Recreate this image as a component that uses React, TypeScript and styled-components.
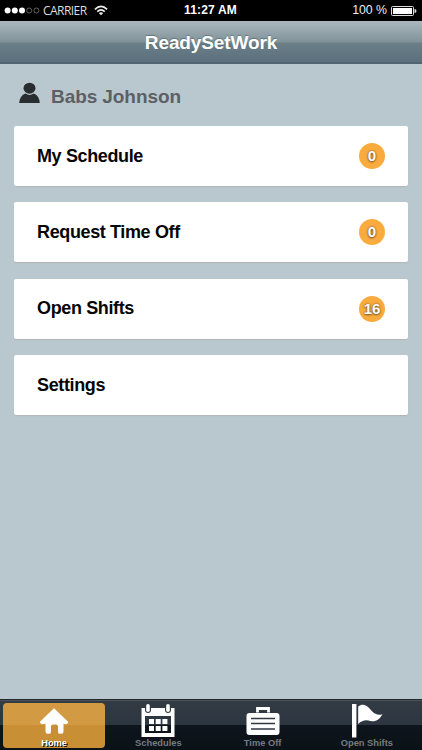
import React from 'react';
import styled, { createGlobalStyle } from 'styled-components';

const GlobalStyle = createGlobalStyle`
  html, body { margin: 0; padding: 0; }
  body { font-family: "Liberation Sans", Arial, sans-serif; background: #b9c8cf; }
  * { box-sizing: border-box; }
`;

const Screen = styled.div`
  width: 100%;
  height: 100vh;
  display: flex;
  flex-direction: column;
  background: #b9c8cf;
  overflow: hidden;
`;

const StatusBar = styled.div`
  flex: none;
  height: 21px;
  background: #000;
  color: #fff;
  display: grid;
  grid-template-columns: 1fr auto 1fr;
  align-items: center;
  padding: 0 5px 0 4px;
  line-height: 21px;
`;

const StatusGroup = styled.div<{ $end?: boolean }>`
  display: flex;
  align-items: center;
  justify-content: ${p => (p.$end ? 'flex-end' : 'flex-start')};
  svg { display: block; }
`;

const Carrier = styled.span`
  font: 12px/20px "Open Sans", "Noto Sans", sans-serif;
  letter-spacing: -0.55px;
  color: #ddd;
  margin: 0 7px 0 3px;
`;

const Clock = styled.span`
  font-size: 12px;
  font-weight: bold;
  letter-spacing: 0.15px;
`;

const Battery = styled.span`
  font-size: 12.3px;
  color: #eee;
  margin-right: 4px;
`;

const Header = styled.header`
  flex: none;
  height: 43px;
  display: flex;
  align-items: center;
  justify-content: center;
  color: #fff;
  font-size: 19px;
  letter-spacing: -0.12px;
  font-weight: bold;
  text-shadow: 0 -1px 1px rgba(50, 70, 80, 0.45);
  background: linear-gradient(#aab7be 0, #819399 21px, #6a7f87 22px, #5b707d 41px, #506571 41px);
`;

const Main = styled.main`
  flex: 1;
  padding: 18px 14px 0;
`;

const User = styled.div`
  display: flex;
  height: 30px;
  padding-left: 5px;
  color: #5c6064;
  font-size: 19px;
  letter-spacing: -0.08px;
  font-weight: bold;
  line-height: 30px;
  svg { display: block; margin-right: 10px; }
`;

const Menu = styled.div`
  display: flex;
  flex-direction: column;
  gap: 16.4px;
  padding-top: 14px;
`;

const Card = styled.div`
  height: 60px;
  display: flex;
  align-items: center;
  justify-content: space-between;
  padding: 0 23px;
  background: #fff;
  border-radius: 2px;
  box-shadow: 0 1px 1px #b3b5b8;
  font-size: 18px;
  letter-spacing: -0.37px;
  font-weight: bold;
  color: #060606;
`;

const Badge = styled.span`
  width: 26px;
  height: 26px;
  border-radius: 50%;
  background: #f9ab3e;
  color: #fff;
  font-size: 15px;
  letter-spacing: 0;
  line-height: 26px;
  text-align: center;
  text-shadow: 0 0 2px #6b4a1c, 0 1px 2px rgba(90, 60, 20, 0.7);
`;

const TabBar = styled.nav`
  flex: none;
  height: 51px;
  display: grid;
  grid-template-columns: repeat(4, 1fr);
  padding: 4px 3px 2px 2px;
  background: linear-gradient(#23282d 0 1px, #4a5259 1px 2px, #333b43 2px, #2c3641 26px, #0e151c 26px, #0a1117 100%);
`;

const Tab = styled.div<{ $active?: boolean }>`
  display: flex;
  flex-direction: column;
  align-items: center;
  margin: 0 1px;
  border-radius: 4px;
  background: ${p => (p.$active ? 'linear-gradient(#d29b43 0 22px, #c98f35 22px)' : 'none')};
  color: ${p => (p.$active ? '#fff' : '#777b7f')};
  text-shadow: ${p => (p.$active ? '1px 1px 0 #000' : 'none')};
  font-size: 9.3px;
  font-weight: bold;
  line-height: 10px;
  svg { display: block; flex: none; }
`;

const HomeIcon = () => (
  <svg width="34" height="35" viewBox="0 0 34 35" fill="#fff">
    <path d="M17 5.3 L31.3 19 Q30.7 21.3 28.5 21.3 L26.5 20.5 V28.5 Q26.5 30.8 24.5 30.8 H22.5 Q21 30.8 21 28.5 V23.5 Q21 21.5 19 21.5 H16 Q14 21.5 14 23.5 V28.5 Q14 30.8 12.5 30.8 H10.5 Q8.5 30.8 8.5 28.5 V20.5 L6 21.3 Q3.5 21.3 2.7 19 Z" />
  </svg>
);

const CalendarIcon = () => (
  <svg width="34" height="35" viewBox="0 0 34 35" fill="#fff">
    <path fillRule="evenodd" d="M0.5 5 H33.5 V34 H0.5 Z M4 13 V30 H30 V13 Z" />
    <rect x="4" y="1" width="6" height="9" rx="3" fill="#333b43" />
    <rect x="24" y="1" width="6" height="9" rx="3" fill="#333b43" />
    <rect x="5.2" y="1" width="3.6" height="8" rx="1.8" />
    <rect x="25.2" y="1" width="3.6" height="8" rx="1.8" />
    {[16, 23].map(y => [8, 14.7, 21.4].map(x => <rect key={`${x}-${y}`} x={x} y={y} width="5" height="5" />))}
  </svg>
);

const CaseIcon = () => (
  <svg width="34" height="35" viewBox="0 0 34 35">
    <path d="M11.5 9.5 V5.5 H22.5 V9.5" fill="none" stroke="#fff" strokeWidth="2.8" />
    <rect x=".5" y="10" width="33" height="22" rx="3" fill="#fff" />
    <path d="M5 15.5 H29 M5 20.5 H29 M5 26 H29" stroke="#303840" strokeWidth="1.6" />
  </svg>
);

const FlagIcon = () => (
  <svg width="34" height="35" viewBox="0 0 34 35" fill="#fff">
    <rect x="2" y="1" width="4.4" height="33.5" />
    <path d="M8.2 3.5 C12 .8 15.5 1.2 20 6 C24 10.5 27 13 32.5 11.2 C29.5 16.5 25.5 19.2 20.5 18 C15.5 16.5 12 17.5 8.2 21 Z" />
  </svg>
);

const PersonIcon = () => (
  <svg width="22" height="23" viewBox="0 0 22 23" fill="#2a2d2f">
    <ellipse cx="10.5" cy="6.2" rx="6" ry="5.5" />
    <path d="M.2 21 Q1 13.5 6.4 11.6 Q10.5 14.2 14.8 11.6 Q20 13.5 20.8 21 Z" />
  </svg>
);

const SignalIcon = () => (
  <svg width="36" height="7" viewBox="0 0 36 7">
    {[0, 1, 2, 3, 4].map(i => (
      <circle
        key={i}
        cx={3.6 + i * 7.2}
        cy="3.5"
        r={i < 3 ? 3 : 2.5}
        fill={i < 3 ? '#fff' : 'none'}
        stroke={i < 3 ? 'none' : '#777'}
        strokeWidth=".8"
      />
    ))}
  </svg>
);

const WifiIcon = () => (
  <svg width="14" height="11" viewBox="0 0 14 11" fill="none" stroke="#eee" strokeWidth="1.6">
    <path d="M.9 4.3 Q7 -1.5 13.1 4.3 M3.2 6.6 Q7 3.1 10.8 6.6" />
    <path d="M4.8 8.1 Q7 6.3 9.2 8.1 L7 10.3 Z" fill="#eee" stroke="none" />
  </svg>
);

const BatteryIcon = () => (
  <svg width="26" height="10" viewBox="0 0 26 10">
    <rect x=".5" y=".5" width="22" height="9" rx="1" fill="none" stroke="#ddd" />
    <rect x="2" y="2" width="19" height="6" fill="#fff" />
    <path d="M23.5 3 Q25.5 3.2 25.5 5 Q25.5 6.8 23.5 7 Z" fill="#ddd" />
  </svg>
);

const items = [
  { label: 'My Schedule', count: 0 },
  { label: 'Request Time Off', count: 0 },
  { label: 'Open Shifts', count: 16 },
  { label: 'Settings' },
];

const tabs = [
  { label: 'Home', Icon: HomeIcon },
  { label: 'Schedules', Icon: CalendarIcon },
  { label: 'Time Off', Icon: CaseIcon },
  { label: 'Open Shifts', Icon: FlagIcon },
];

export default function App() {
  return (
    <Screen>
      <GlobalStyle />
      <StatusBar>
        <StatusGroup>
          <SignalIcon />
          <Carrier>CARRIER</Carrier>
          <WifiIcon />
        </StatusGroup>
        <Clock>11:27 AM</Clock>
        <StatusGroup $end>
          <Battery>100 %</Battery>
          <BatteryIcon />
        </StatusGroup>
      </StatusBar>
      <Header>ReadySetWork</Header>
      <Main>
        <User>
          <PersonIcon />
          Babs Johnson
        </User>
        <Menu>
          {items.map(item => (
            <Card key={item.label}>
              {item.label}
              {item.count !== undefined && <Badge>{item.count}</Badge>}
            </Card>
          ))}
        </Menu>
      </Main>
      <TabBar>
        {tabs.map(({ label, Icon }, i) => (
          <Tab key={label} $active={i === 0}>
            <Icon />
            {label}
          </Tab>
        ))}
      </TabBar>
    </Screen>
  );
}
